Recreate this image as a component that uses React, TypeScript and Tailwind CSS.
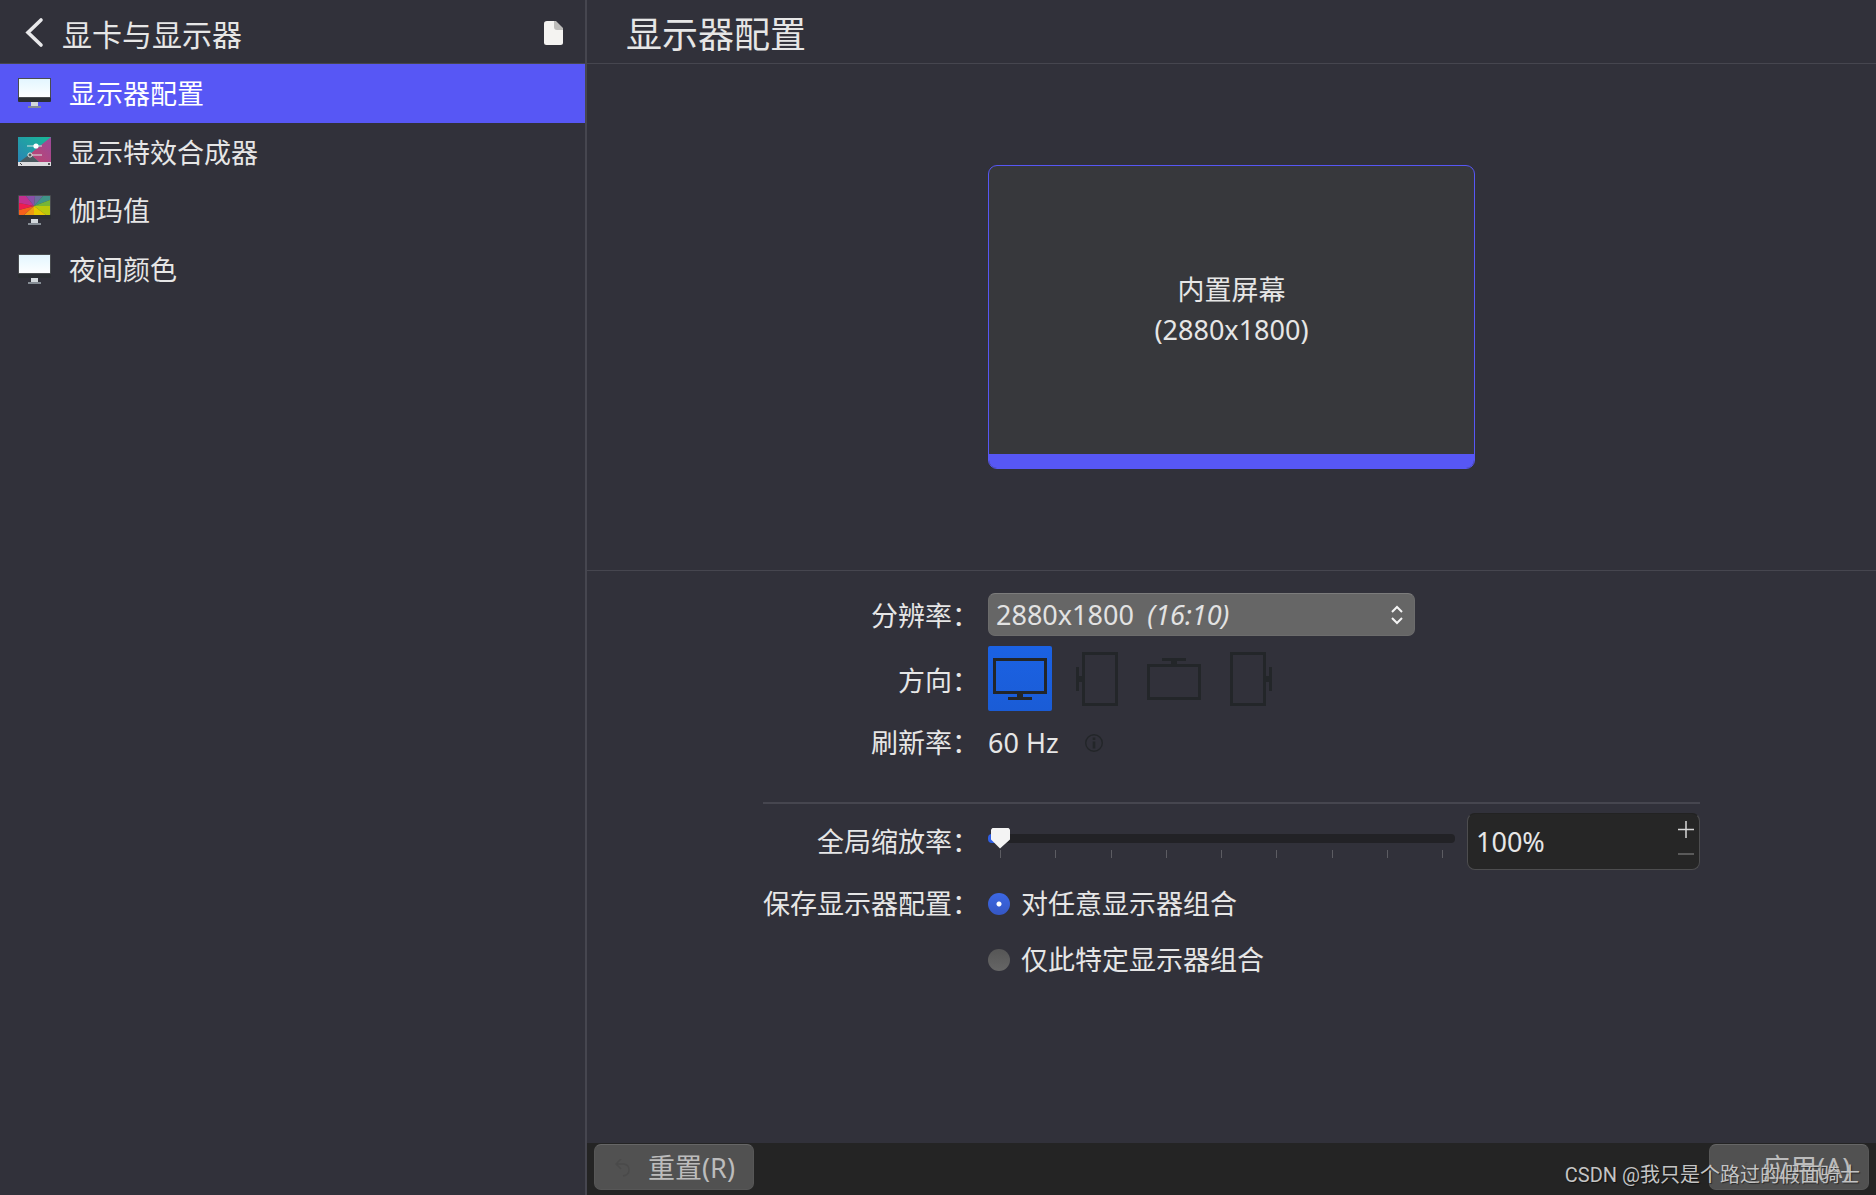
import { useState } from 'react';

const MENU = [
  { label: '显示器配置', icon: 'display' },
  { label: '显示特效合成器', icon: 'compositor' },
  { label: '伽玛值', icon: 'gamma' },
  { label: '夜间颜色', icon: 'display' },
];

const ROTATIONS = [
  { id: 'normal', label: '正常', angle: 0 },
  { id: 'left', label: '向左旋转', angle: 90 },
  { id: 'inverted', label: '倒置', angle: 180 },
  { id: 'right', label: '向右旋转', angle: 270 },
];

const TICKS = [0, 1, 2, 3, 4, 5, 6, 7, 8];

const WHEEL = [
  { points: '16,11 1,8 1,1 8,1', fill: '#c2308f' },
  { points: '16,11 8,1 17,1', fill: '#8a4fa8' },
  { points: '16,11 17,1 25,1', fill: '#6a6f9c' },
  { points: '16,11 25,1 32,1 32,5', fill: '#3f9488' },
  { points: '16,11 32,5 32,11', fill: '#76b536' },
  { points: '16,11 32,11 32,20 28,20', fill: '#b9c90c' },
  { points: '16,11 28,20 16,20', fill: '#e6c800' },
  { points: '16,11 16,20 6,20', fill: '#f09a12' },
  { points: '16,11 6,20 1,20 1,15', fill: '#f5601c' },
  { points: '16,11 1,15 1,8', fill: '#ee1c50' },
];

function MonitorIcon({ gamma = false }: { gamma?: boolean }) {
  return (
    <svg width="33" height="30" viewBox="0 0 33 30" aria-hidden="true">
      <defs>
        <linearGradient id="screen" x1="0" y1="0" x2="0" y2="1">
          <stop offset="0" stopColor="#e3f6ff" />
          <stop offset="1" stopColor="#fdfeff" />
        </linearGradient>
      </defs>
      <rect width="33" height="24" rx="1" fill="#2c2f33" />
      <rect width="33" height="20" rx="1" fill="#4a4d50" />
      {gamma ? (
        WHEEL.map((w) => <polygon key={w.points} points={w.points} fill={w.fill} />)
      ) : (
        <rect x="1" y="1" width="31" height="18" fill="url(#screen)" />
      )}
      <rect x="13" y="24" width="7" height="4" fill="#d3d8dc" />
      <rect x="10" y="28" width="13" height="2" fill="#858c94" />
    </svg>
  );
}

function CompositorIcon() {
  return (
    <svg width="33" height="30" viewBox="0 0 33 30" aria-hidden="true">
      <defs>
        <linearGradient id="teal" x1="0" y1="1" x2="1" y2="0">
          <stop offset="0" stopColor="#2b83b6" />
          <stop offset="1" stopColor="#19b996" />
        </linearGradient>
        <linearGradient id="pink" x1="0" y1="1" x2="1" y2="0">
          <stop offset="0" stopColor="#c2436a" />
          <stop offset="1" stopColor="#9a4a9c" />
        </linearGradient>
      </defs>
      <rect width="33" height="26" fill="url(#teal)" />
      <polygon points="33,0 12,17 22,26 33,26" fill="url(#pink)" />
      <polygon points="0,26 12,17 22,26" fill="#4b5a60" />
      <rect y="25" width="33" height="4" fill="#dcdcdf" />
      <path d="M2 26l2 2" stroke="#444" />
      <rect x="30" y="26" width="2" height="2" fill="#555" />
      <path d="M9 9h15M14 18h10" stroke="#d9e4e4" />
      <circle cx="18" cy="9" r="2.6" fill="#fff" />
      <circle cx="12" cy="18" r="2.1" fill="#555" stroke="#e8e8e8" />
    </svg>
  );
}

function MenuIcon({ name }: { name: string }) {
  if (name === 'compositor') return <CompositorIcon />;
  return <MonitorIcon gamma={name === 'gamma'} />;
}

function Sidebar() {
  const [active, setActive] = useState(0);

  return (
    <aside className="w-[587px] shrink-0 border-r-2 border-[#46464f]">
      <header className="flex h-16 items-center border-b border-[#46464f] pl-6 pr-[22px]">
        <button aria-label="返回" className="flex h-10 w-[38px] items-center">
          <svg width="22" height="32" viewBox="0 0 22 32" fill="none" aria-hidden="true">
            <path d="M17 4L4 16.500L17 29" stroke="#e8e8ea" strokeWidth="3.600" strokeLinecap="round" />
          </svg>
        </button>
        <h2 className="flex-1 pt-1.5 text-[30px] leading-10">显卡与显示器</h2>
        <button aria-label="菜单" className="flex pt-0.5">
          <svg width="19" height="24" viewBox="0 0 19 24" aria-hidden="true">
            <path d="M3 0H10L19 8V21.500Q19 24 16.500 24H2.500Q0 24 0 21.500V2.500Q0 0 3 0Z" fill="#f4f3f1" />
            <path d="M10 0H12L19 7V9H13Q10 9 10 6Z" fill="#bdbcba" />
          </svg>
        </button>
      </header>
      <nav className="grid h-[234px] grid-rows-4">
        {MENU.map((item, i) => (
          <button
            key={item.label}
            onClick={() => setActive(i)}
            className={`flex w-full items-center gap-[18px] pl-[18px] text-left text-[27px] leading-9 ${
              i === active ? 'bg-[#5757f5] text-white' : ''
            }`}
          >
            <MenuIcon name={item.icon} />
            <span className="pt-0.5">{item.label}</span>
          </button>
        ))}
      </nav>
    </aside>
  );
}

function RotationIcon({ angle }: { angle: number }) {
  return (
    <svg width="64" height="64" viewBox="0 0 64 64" fill="none" aria-hidden="true">
      <g transform={`rotate(${angle} 32 32)`}>
        <rect x="6.500" y="12.500" width="51" height="33" stroke="#232629" strokeWidth="3" />
        <rect x="29" y="47" width="6" height="4" fill="#232629" />
        <rect x="20" y="50" width="24" height="3" fill="#232629" />
      </g>
    </svg>
  );
}

function Preview() {
  return (
    <section className="flex h-[507px] items-center justify-center border-b border-[#46464f]">
      <div className="flex h-[304px] w-[487px] flex-col overflow-hidden rounded-[9px] border border-[#5757f5] bg-[#37383c]">
        <div className="flex flex-1 flex-col items-center justify-center text-center text-[27px] leading-10">
          <p>内置屏幕</p>
          <p>(2880x1800)</p>
        </div>
        <div className="h-[14px] bg-[#5757f5]" />
      </div>
    </section>
  );
}

function DisplayForm() {
  const [rotation, setRotation] = useState('normal');
  const [scale, setScale] = useState(100);
  const [retention, setRetention] = useState('any');

  return (
    <form className="mx-auto w-[937px] pt-[22px] text-[27px] leading-9">
      <div className="grid grid-cols-[216px_1fr] items-center gap-x-[9px]">
        <label htmlFor="resolution" className="pt-0.5 text-right">分辨率：</label>
        <div className="relative w-[427px]">
          <select
            id="resolution"
            className="flex h-[43px] w-full items-center [appearance:base-select] rounded-[7px] border border-t-[#7c7c7c] border-[#6c6c6c] bg-[#666666] px-[7px] py-0 text-[#e2e2e2] [&::picker-icon]:hidden"
          >
            <button type="button">
              2880x1800 <em>(16:10)</em>
            </button>
            <option>2880x1800 (16:10)</option>
          </select>
          <svg
            className="pointer-events-none absolute right-3 top-3"
            width="12"
            height="20"
            viewBox="0 0 12 20"
            fill="none"
            aria-hidden="true"
          >
            <path d="M1 7L6 2L11 7M1 13L6 18L11 13" stroke="#f4f4f4" strokeWidth="2" />
          </svg>
        </div>

        <span id="rotation-label" className="pt-[14px] text-right">方向：</span>
        <div role="group" aria-labelledby="rotation-label" className="flex gap-[13px] pt-[10px]">
          {ROTATIONS.map((r) => (
            <button
              key={r.id}
              type="button"
              aria-label={r.label}
              aria-pressed={rotation === r.id}
              onClick={() => setRotation(r.id)}
              className={`flex h-[65px] w-16 items-center rounded-[2px] ${
                rotation === r.id ? 'bg-linear-to-b from-[#1b62e4] to-[#1a5cd6]' : ''
              }`}
            >
              <RotationIcon angle={r.angle} />
            </button>
          ))}
        </div>

        <span className="pt-[14px] text-right">刷新率：</span>
        <div className="flex items-center gap-[26px] pt-[14px]">
          <span>60 Hz</span>
          <svg width="18" height="18" viewBox="0 0 18 18" fill="none" aria-hidden="true">
            <circle cx="9" cy="9" r="8.300" stroke="#232629" strokeWidth="1.400" />
            <path d="M9 3.500v2.500M9 7.500v7" stroke="#232629" strokeWidth="2.600" />
          </svg>
        </div>
      </div>

      <hr className="mt-[41px] border-t-2 border-[#46464f]" />

      <div className="grid grid-cols-[216px_1fr] items-center gap-x-[9px] pt-[9px]">
        <label htmlFor="scale" className="text-right">全局缩放率：</label>
        <div className="flex items-center justify-between gap-3">
          <div className="flex-1 pt-2">
            <input
              id="scale"
              type="range"
              min={100}
              max={300}
              step={25}
              value={scale}
              onChange={(e) => setScale(Number(e.target.value))}
              className="block h-[9px] w-full appearance-none rounded-[4px] bg-[#222226] bg-[linear-gradient(to_right,#2f5fe6_12px,transparent_12px)] px-[3px] [&::-webkit-slider-thumb]:h-[21px] [&::-webkit-slider-thumb]:w-[19px] [&::-webkit-slider-thumb]:appearance-none [&::-webkit-slider-thumb]:bg-[#f4f4f4] [&::-webkit-slider-thumb]:[clip-path:polygon(2px_0,17px_0,19px_2px,19px_12px,9px_21px,0_12px,0_2px)]"
            />
            <div className="flex justify-between px-3 pt-[7px]">
              {TICKS.map((t) => (
                <span key={t} className="h-2 w-px bg-[#5c5c62]" />
              ))}
            </div>
          </div>
          <div className="flex h-[57px] w-[233px] rounded-[8px] border border-[#4d4d4f] border-t-[#222222] bg-[#262626] pl-2 pr-[5px]">
            <input
              type="text"
              aria-label="缩放比例"
              value={`${scale}%`}
              onChange={(e) => setScale(parseInt(e.target.value, 10) || 100)}
              className="min-w-0 flex-1 bg-transparent outline-none"
            />
            <div className="flex flex-col justify-center gap-1">
              <button type="button" aria-label="增大" onClick={() => setScale(Math.min(scale + 25, 300))}>
                <svg className="block" width="16" height="24" viewBox="0 0 16 24" aria-hidden="true">
                  <path d="M0 11.500H16M8 3V20" stroke="#d6d6d6" strokeWidth="1.500" />
                </svg>
              </button>
              <button type="button" aria-label="减小" onClick={() => setScale(Math.max(scale - 25, 100))}>
                <svg className="block" width="16" height="20" viewBox="0 0 16 20" aria-hidden="true">
                  <path d="M0 8H16" stroke="#5a5a5a" strokeWidth="2" />
                </svg>
              </button>
            </div>
          </div>
        </div>
      </div>

      <div className="grid grid-cols-[216px_1fr] gap-x-[9px] pt-4">
        <span id="retention-label" className="text-right">保存显示器配置：</span>
        <div role="radiogroup" aria-labelledby="retention-label" className="flex flex-col gap-5">
          {[
            { id: 'any', label: '对任意显示器组合' },
            { id: 'only', label: '仅此特定显示器组合' },
          ].map((o) => (
            <label key={o.id} className="flex items-center gap-[11px]">
              <input
                type="radio"
                name="retention"
                checked={retention === o.id}
                onChange={() => setRetention(o.id)}
                className="size-[22px] appearance-none rounded-full bg-linear-to-b from-[#565656] to-[#666666] checked:bg-[radial-gradient(circle,#ffffff_2px,transparent_3px),linear-gradient(#3c68e4,#3557c4)]"
              />
              <span>{o.label}</span>
            </label>
          ))}
        </div>
      </div>
    </form>
  );
}

function Footer() {
  const button =
    'flex h-[46px] w-40 items-center gap-[15px] rounded-[7px] border border-[#575757] border-t-[#666666] bg-[#515151] pl-5 pt-0.5 text-[27px] leading-9 text-[#bcbcbc]';

  return (
    <footer className="relative flex h-[52px] items-start justify-between bg-[#242424] px-[7px] pt-px">
      <button className={button}>
        <svg width="18" height="18" viewBox="0 0 18 18" fill="none" stroke="#4a4a4a" strokeWidth="1.500" aria-hidden="true">
          <path d="M6 0L1 5L6 10M1 5H9Q14 6 14 11Q14 16 8 17" />
        </svg>
        重置(R)
      </button>
      <button className={button}>
        <svg width="18" height="18" viewBox="0 0 18 18" fill="none" stroke="#4a4a4a" strokeWidth="1.500" aria-hidden="true">
          <path d="M1 11L6 16L17 3" />
        </svg>
        应用(A)
      </button>
      <span className="pointer-events-none absolute bottom-1.5 right-4 font-['Roboto','Noto_Sans_CJK_SC',sans-serif] text-xl text-[#c4c4c4] text-shadow-[1px_1px_1px_#00000080]">
        CSDN @我只是个路过的假面骑士
      </span>
    </footer>
  );
}

export default function App() {
  return (
    <div className="flex min-h-screen bg-[#31313a] font-['Noto_Sans','Noto_Sans_CJK_SC',sans-serif] text-[#e6e6e6]">
      <Sidebar />
      <main className="flex min-w-0 flex-1 flex-col">
        <header className="flex h-16 items-center border-b border-[#46464f] pl-[39px]">
          <h1 className="pt-1.5 text-4xl">显示器配置</h1>
        </header>
        <Preview />
        <div className="flex-1">
          <DisplayForm />
        </div>
        <Footer />
      </main>
    </div>
  );
}
